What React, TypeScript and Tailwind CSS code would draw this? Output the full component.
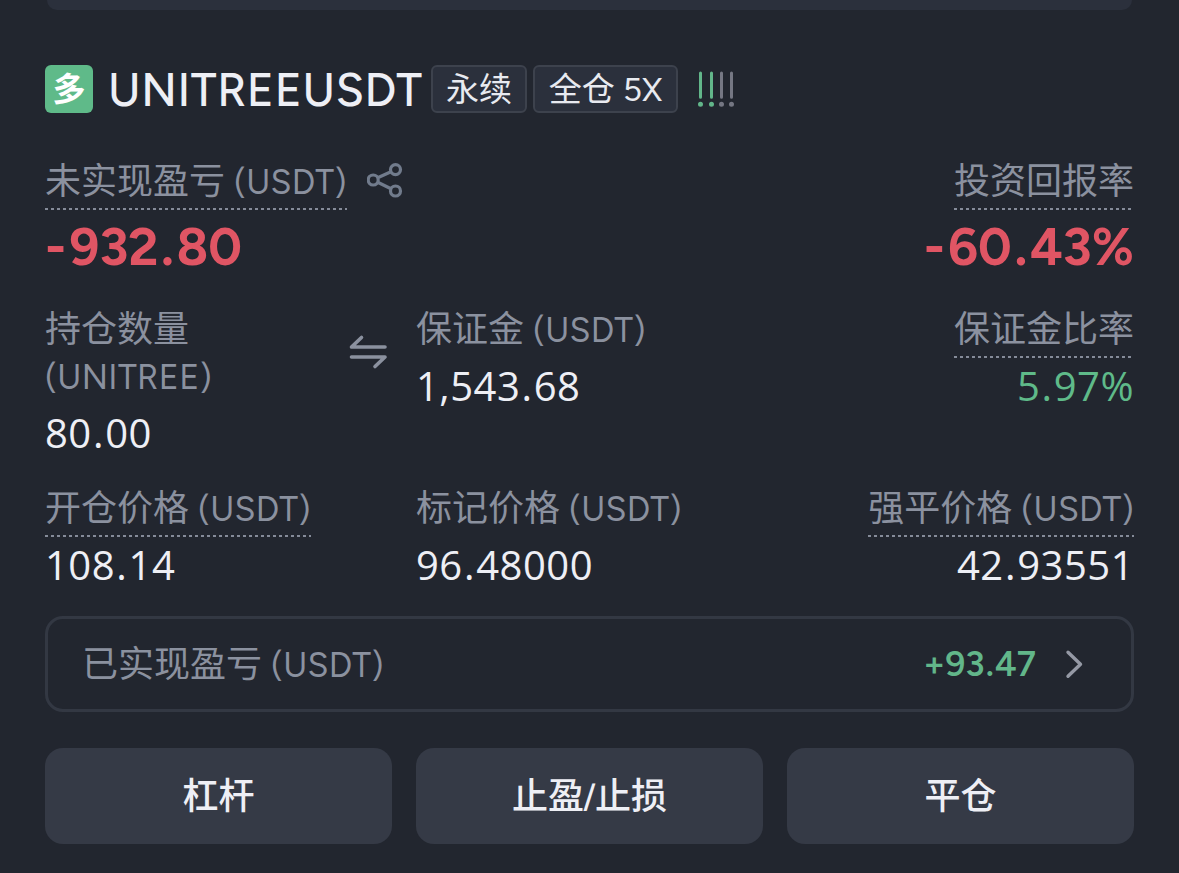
import type { ReactNode } from "react";

const latin = "font-['Figtree','Open_Sans','Noto_Sans_CJK_SC',sans-serif]";
const digits = "font-['Open_Sans','Noto_Sans',sans-serif]";

function Label({ children, dashed = false, className = "" }: { children: ReactNode; dashed?: boolean; className?: string }) {
  return (
    <div className={`relative h-12 w-fit whitespace-nowrap pt-px text-[36px] leading-[48px] text-[#8b919f] ${className}`}>
      {children}
      {dashed && (
        <span className="absolute inset-x-0 top-[51px] h-[2px] bg-[repeating-linear-gradient(90deg,#858b99_0_3px,transparent_3px_6px)]" />
      )}
    </div>
  );
}

function Unit({ children = "(USDT)" }: { children?: string }) {
  return <span className="text-[34px] tracking-[0.35px]">{children}</span>;
}

function Num({ children, dot = "px-[0.03em]" }: { children: string; dot?: string }) {
  const [whole, fraction] = children.split(".");
  return (
    <>
      {whole}
      <span className={dot}>.</span>
      {fraction}
    </>
  );
}

function Value({ children, className = "text-[#eeeff5]" }: { children: string; className?: string }) {
  return (
    <div className={`mt-[9px] h-12 whitespace-nowrap text-[40px] leading-[48px] tracking-[0.5px] ${digits} ${className}`}>
      <Num>{children}</Num>
    </div>
  );
}

function Loss({ children }: { children: string }) {
  return (
    <div className="mt-[15px] flex whitespace-nowrap text-[52px] font-bold leading-[54px] text-[#e05564]">
      <span className="mr-[3px]">-</span>
      <span><Num dot="px-[0.05em]">{children}</Num></span>
    </div>
  );
}

function Action({ children }: { children: ReactNode }) {
  return (
    <button className="flex h-24 items-center justify-center rounded-[18px] bg-[#353a46] pt-px text-[36px] font-medium text-[#eeeff5]">
      {children}
    </button>
  );
}

function ShareIcon() {
  return (
    <svg className="ml-5 size-9 text-[#717b8c]" viewBox="0 0 36 36" fill="none" stroke="currentColor" strokeWidth="3.2">
      <circle cx="6.2" cy="17" r="5" />
      <circle cx="28.5" cy="6.6" r="5" />
      <circle cx="28.5" cy="28" r="5" />
      <path d="M10.7 14.8 24 8.8M10.7 19.2 24 25.8" />
    </svg>
  );
}

function SwapIcon() {
  return (
    <svg className="mt-[29px] h-9 w-10 text-[#8b919f]" viewBox="0 0 40 36" fill="none" stroke="currentColor" strokeWidth="3.6" strokeLinecap="round" strokeLinejoin="round">
      <path d="M13.5 3.5 3.5 13H37" />
      <path d="M3.5 23H37L27 32.5" />
    </svg>
  );
}

function RiskBars() {
  return (
    <svg className="ml-[19px] h-[38px] w-[40px]" viewBox="0 0 40 38" strokeWidth="3" strokeLinecap="round">
      <g stroke="#62b68a" fill="#62b68a">
        <path d="M3.5 3V27.2M14.5 3V27.2" />
        <circle cx="3.5" cy="34.3" r="1" />
        <circle cx="14.5" cy="34.3" r="1" />
      </g>
      <g stroke="#757783" fill="#757783">
        <path d="M24.5 3V27.2M34.5 3V27.2" />
        <circle cx="24.5" cy="34.3" r="1" />
        <circle cx="34.5" cy="34.3" r="1" />
      </g>
    </svg>
  );
}

export default function App() {
  return (
    <main className={`h-[873px] w-[1179px] overflow-hidden bg-[#22262f] px-[45px] ${latin}`}>
      <div className="mx-[2px] h-[10px] rounded-b-[16px] bg-[#2b303c]" />

      <header className="mt-[55px] flex h-12 items-center whitespace-nowrap">
        <div className="flex size-12 items-center justify-center rounded-md bg-[#5fba89] text-[33px] font-bold leading-none text-white">多</div>
        <h1 className="ml-[15px] w-[323px] pt-[2px] text-[46px] font-medium leading-[48px] tracking-[0.65px] text-[#eeeff5]">UNITREEUSDT</h1>
        <span className="flex h-12 w-24 items-center justify-center rounded-md border-2 border-[#3d424d] bg-[#2b303c] pt-[2px] text-[33px] text-[#e8eaf0]">永续</span>
        <span className="ml-[6px] flex h-12 w-[145px] items-center justify-center rounded-md border-2 border-[#3d424d] bg-[#2b303c] pt-[2px] text-[33px] text-[#e8eaf0]">全仓 5X</span>
        <RiskBars />
      </header>

      <section className="mt-11 flex justify-between">
        <div>
          <div className="flex items-center">
            <Label dashed>未实现盈亏 <Unit /></Label>
            <ShareIcon />
          </div>
          <Loss>932.80</Loss>
        </div>
        <div className="flex flex-col items-end">
          <Label dashed>投资回报率</Label>
          <Loss>60.43%</Loss>
        </div>
      </section>

      <section className="mt-[31px] grid h-[153px] grid-cols-3 gap-x-6">
        <div className="flex justify-between pr-1">
          <div>
            <Label>持仓数量</Label>
            <Label className="-mt-px"><Unit>(UNITREE)</Unit></Label>
            <Value>80.00</Value>
          </div>
          <SwapIcon />
        </div>
        <div>
          <Label>保证金 <Unit /></Label>
          <Value>1,543.68</Value>
        </div>
        <div className="flex flex-col items-end">
          <Label dashed>保证金比率</Label>
          <Value className="text-[#5fba89]">5.97%</Value>
        </div>
      </section>

      <section className="mt-[26px] grid h-[106px] grid-cols-3 gap-x-6">
        <div>
          <Label dashed>开仓价格 <Unit /></Label>
          <Value>108.14</Value>
        </div>
        <div>
          <Label>标记价格 <Unit /></Label>
          <Value>96.48000</Value>
        </div>
        <div className="flex flex-col items-end">
          <Label dashed>强平价格 <Unit /></Label>
          <Value>42.93551</Value>
        </div>
      </section>

      <section className="mt-[26px] flex h-24 items-center rounded-[18px] border-[3px] border-[#333843] pl-[34px] pr-[47px]">
        <Label>已实现盈亏 <Unit /></Label>
        <span className="ml-auto text-[35px] font-semibold text-[#62b68a]"><Num dot="px-[0.03em]">+93.47</Num></span>
        <svg className="ml-7 h-[30px] w-5 text-[#9599a5]" viewBox="0 0 20 30" fill="none" stroke="currentColor" strokeWidth="3.4" strokeLinecap="round" strokeLinejoin="round">
          <path d="m4 3.2 12.5 12L4 27.2" />
        </svg>
      </section>

      <div className="mt-9 grid grid-cols-3 gap-x-6">
        <Action>杠杆</Action>
        <Action>止盈<span className="-mx-px text-[32px]">/</span>止损</Action>
        <Action>平仓</Action>
      </div>
    </main>
  );
}
